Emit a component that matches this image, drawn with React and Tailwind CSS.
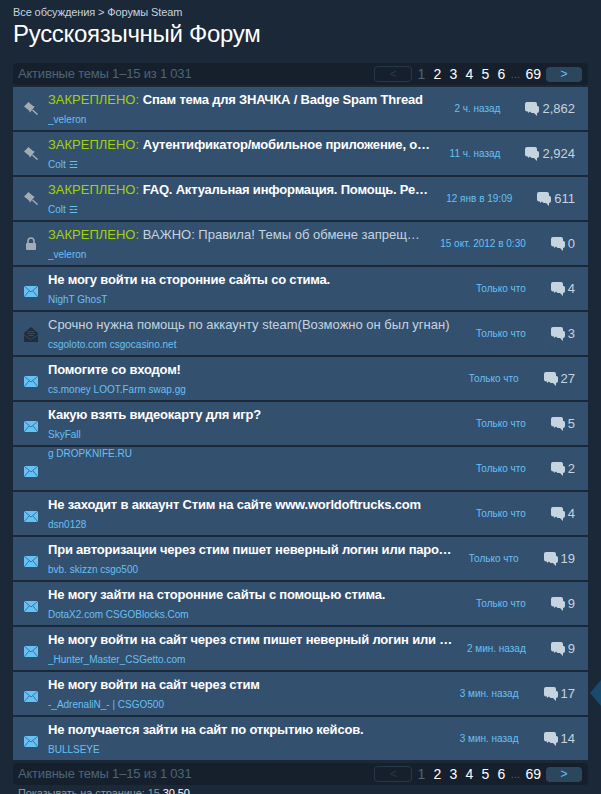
const TOPICS = [
  { pin: true, title: 'Спам тема для ЗНАЧКА / Badge Spam Thread', author: '_veleron', time: '2 ч. назад', count: '2,862', icon: 'pin' },
  { pin: true, title: 'Аутентификатор/мобильное приложение, общие вопросы и ответы по защите', author: 'Colt ☲', time: '11 ч. назад', count: '2,924', icon: 'pin' },
  { pin: true, title: 'FAQ. Актуальная информация. Помощь. Решение проблем и ответы на вопросы', author: 'Colt ☲', time: '12 янв в 19:09', count: '611', icon: 'pin' },
  { pin: true, light: true, title: 'ВАЖНО: Правила! Темы об обмене запрещены на форуме навсегда', author: '_veleron', time: '15 окт. 2012 в 0:30', count: '0', icon: 'lock' },
  { title: 'Не могу войти на сторонние сайты со стима.', author: 'NighT GhosT', time: 'Только что', count: '4' },
  { light: true, title: 'Срочно нужна помощь по аккаунту steam(Возможно он был угнан)', author: 'csgoloto.com csgocasino.net', time: 'Только что', count: '3', icon: 'dark' },
  { title: 'Помогите со входом!', author: 'cs.money LOOT.Farm swap.gg', time: 'Только что', count: '27' },
  { title: 'Какую взять видеокарту для игр?', author: 'SkyFall', time: 'Только что', count: '5' },
  { title: '', author: 'g DROPKNIFE.RU', time: 'Только что', count: '2' },
  { title: 'Не заходит в аккаунт Стим на сайте www.worldoftrucks.com', author: 'dsn0128', time: 'Только что', count: '4' },
  { title: 'При авторизации через стим пишет неверный логин или пароль, что делать', author: 'bvb. skizzn csgo500', time: 'Только что', count: '19' },
  { title: 'Не могу зайти на сторонние сайты с помощью стима.', author: 'DotaX2.com CSGOBlocks.Com', time: 'Только что', count: '9' },
  { title: 'Не могу войти на сайт через стим пишет неверный логин или пароль', author: '_Hunter_Master_CSGetto.com', time: '2 мин. назад', count: '9' },
  { title: 'Не могу войти на сайт через стим', author: '-_AdrenaliN_- | CSGO500', time: '3 мин. назад', count: '17' },
  { title: 'Не получается зайти на сайт по открытию кейсов.', author: 'BULLSEYE', time: '3 мин. назад', count: '14' },
];

function TopicIcon({ type }) {
  if (type === 'pin') {
    return (
      <svg width="14" height="13" viewBox="0 0 14 13" className="text-[#a3abb3]">
        <path d="M0 4.5 4.5 0l.8.8 4 3.4.7-.2.6.7L6 10.5l-.7-.7.2-.9z" fill="currentColor" />
        <path d="m8.5 8 5 4.5" stroke="currentColor" strokeWidth="1.5" />
      </svg>
    );
  }
  if (type === 'lock') {
    return (
      <svg width="12" height="13" viewBox="0 0 12 13" className="text-[#a3abb3]">
        <path d="M3 6V4a3 3 0 0 1 6 0v2" fill="none" stroke="currentColor" strokeWidth="1.6" />
        <rect x="1" y="6" width="10" height="7" rx="1" fill="currentColor" />
      </svg>
    );
  }
  if (type === 'dark') {
    return (
      <svg width="14" height="15" viewBox="0 0 14 15" className="mt-[2px] text-[#212d3c]">
        <path d="M0 6 7 0l7 6v9H0z" fill="currentColor" />
        <path d="M3.5 4.5h7M3 6.5h8M4.5 8.5h5" stroke="#3e4f63" strokeWidth="0.8" />
        <path d="m0 8 7 4.5L14 8" fill="none" stroke="#3e4f63" strokeWidth="0.8" />
      </svg>
    );
  }
  return (
    <svg width="14" height="11" viewBox="0 0 14 11" className="mt-[6px]">
      <rect width="14" height="11" fill="#67c1f5" />
      <path d="m0 0 7 6 7-6M0 11l5-6M14 11 9 5" fill="none" stroke="#2f5f88" strokeWidth="0.8" />
    </svg>
  );
}

function Bubble() {
  return (
    <svg width="14" height="14" viewBox="0 0 14 14" className="text-[#c6d4df]">
      <path d="M2 0h8a2 2 0 0 1 2 2v2h.5A1.5 1.5 0 0 1 14 5.5V9a2 2 0 0 1-2 2v3l-3-3H6.5L5 9.5 3 11V9.5H2a2 2 0 0 1-2-2V2a2 2 0 0 1 2-2z" fill="currentColor" />
    </svg>
  );
}

function Paging() {
  return (
    <div className="flex h-[22px] items-center justify-between rounded-sm bg-[#16202d] pl-[5px] pr-[6px] text-[#4b6478]">
      <span className="text-[13px] tracking-[-0.2px]">Активные темы 1–15 из 1 031</span>
      <div className="flex items-center">
        <span className="mr-[1px] flex h-[16px] w-[38px] items-center justify-center rounded-sm border border-[#25384a] text-[12px] text-[#25384a]">&lt;</span>
        <span className="w-[16px] text-center text-[14px] text-[#4b6478]">1</span>
        {['2', '3', '4', '5', '6'].map(n => (
          <span key={n} className="w-[16px] text-center text-[14px] text-white">{n}</span>
        ))}
        <span className="w-[12px] text-center text-[11px] text-[#4b6478]">...</span>
        <span className="ml-[4px] mr-[5px] text-[14px] text-white">69</span>
        <span className="flex h-[15px] w-[36px] items-center justify-center rounded-sm bg-[#2a475e] text-[12px] text-[#66c0f4]">&gt;</span>
      </div>
    </div>
  );
}

export default function App() {
  return (
    <div className="relative h-[794px] overflow-hidden bg-[#1b2838] px-[13px] font-['Liberation_Sans',Arial,sans-serif]">
      <div className="pt-[5px] text-[11px] leading-[15px] tracking-[-0.1px] text-[#c6d4df]">
        Все обсуждения &gt; Форумы Steam
      </div>
      <h1 className="text-[24px] leading-[28px] tracking-[-0.3px] text-white">Русскоязычный Форум</h1>

      <div className="mt-[15px]">
        <Paging />
      </div>

      <div className="mt-[2px] flex flex-col gap-[2px]">
        {TOPICS.map((t, i) => (
          <div key={i} className="flex h-[43px] items-center bg-[#34506f] pr-[13px]">
            <div className="flex w-[35px] shrink-0 justify-center">
              <TopicIcon type={t.icon} />
            </div>
            <div className="mr-[14px] flex h-full min-w-0 flex-1 flex-col">
              {t.title && (
                <div className={`truncate pt-[4px] text-[13px] leading-[18px] ${t.light ? 'text-[#c6d4df]' : 'font-bold tracking-[-0.2px] text-white'}`}>
                  {t.pin && <span className="font-normal tracking-normal text-[#a4d007]">ЗАКРЕПЛЕНО: </span>}
                  {t.title}
                </div>
              )}
              <div className={`truncate text-[10px] leading-[14px] text-[#66c0f4] ${t.title ? 'mt-[4px]' : ''}`}>{t.author}</div>
            </div>
            <span className="mr-[25px] shrink-0 text-[10px] text-[#66c0f4]">{t.time}</span>
            <Bubble />
            <span className="ml-[3px] shrink-0 text-[13px] text-[#c6d4df]">{t.count}</span>
          </div>
        ))}
      </div>

      <div className="mt-[3px]">
        <Paging />
      </div>
      <div className="pl-[5px] pt-[1px] text-[11px] leading-[15px] tracking-[-0.1px] text-[#8f98a0]">
        Показывать на странице: 15 <span className="text-white">30 50</span>
      </div>

      <div className="absolute right-0 top-[680px] h-[26px] w-[11px] bg-[#1a4a6e] [clip-path:polygon(100%_0,0_50%,100%_100%)]" />
    </div>
  );
}
